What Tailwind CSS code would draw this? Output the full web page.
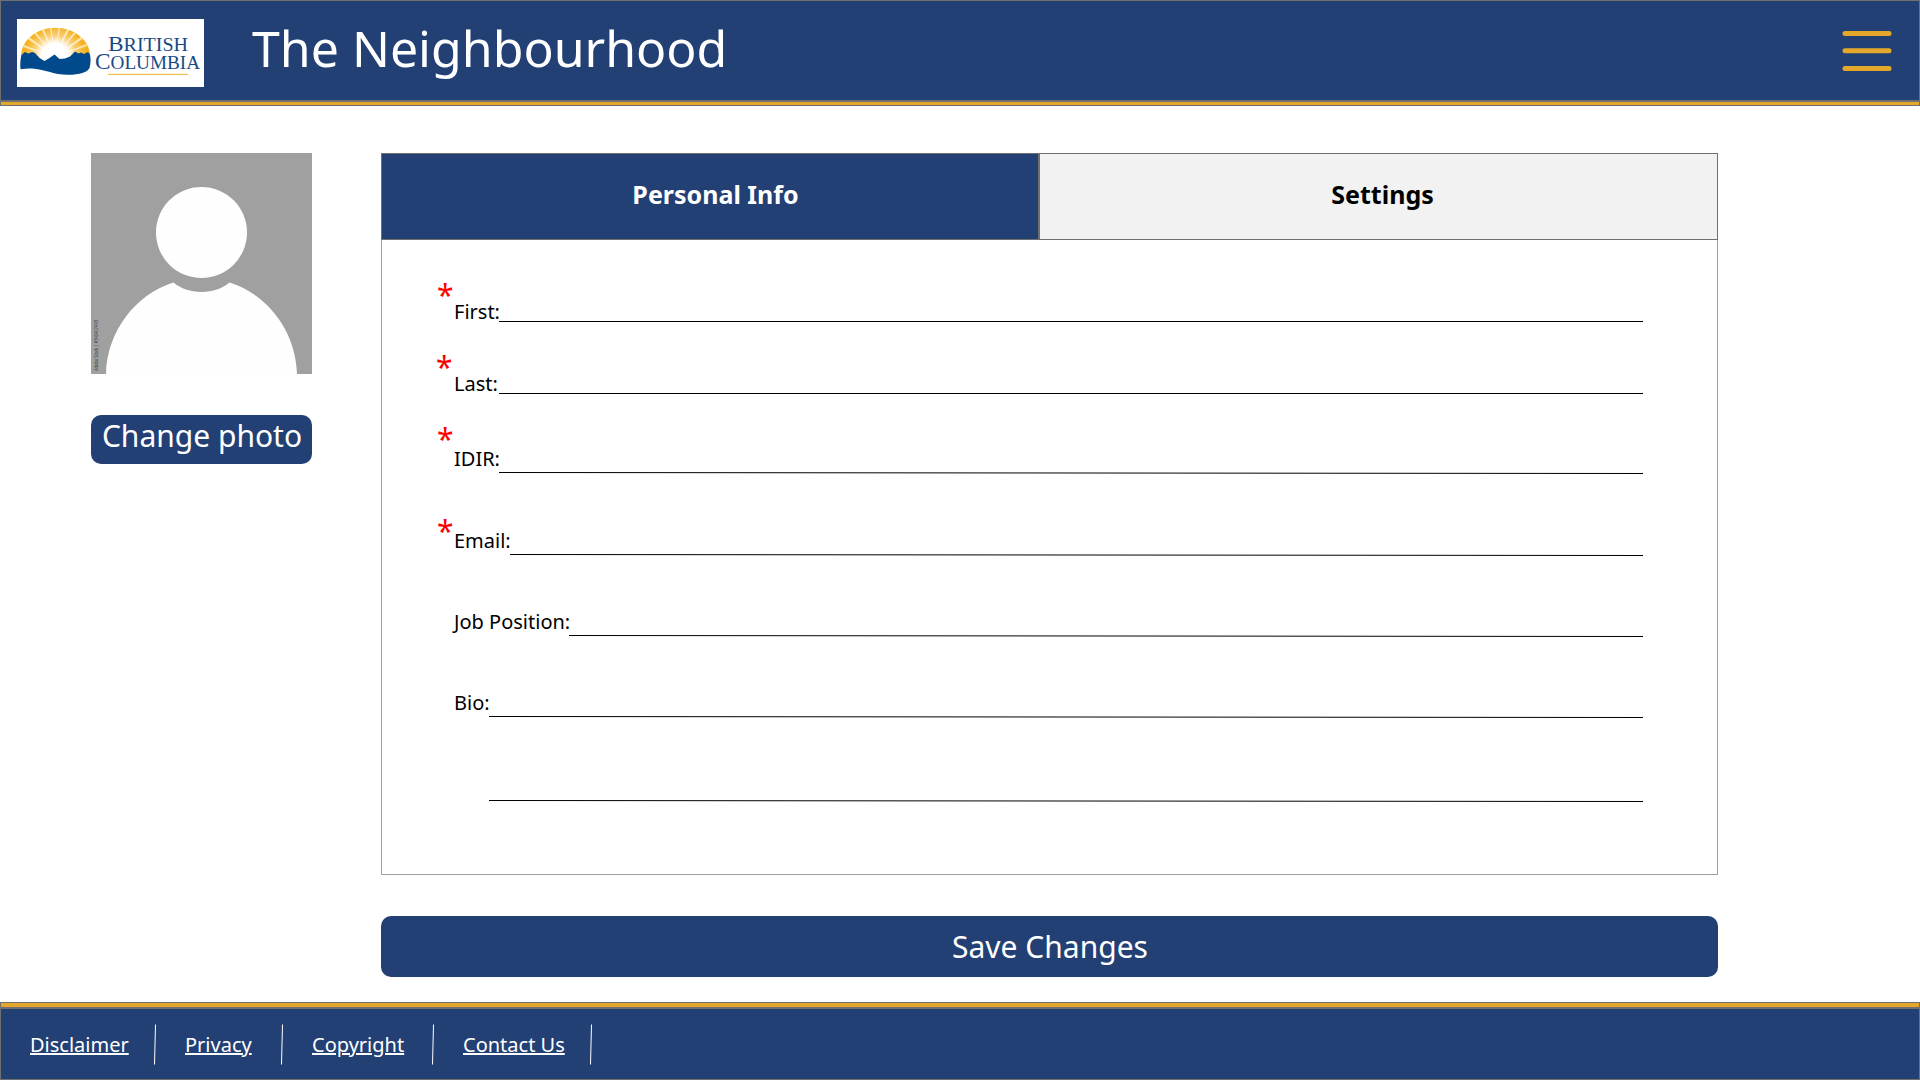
<!DOCTYPE html>
<html lang="en">
<head>
<meta charset="utf-8">
<title>The Neighbourhood</title>
<script src="https://cdn.jsdelivr.net/npm/@tailwindcss/browser@4"></script>
</head>
<body class="flex h-[1080px] w-[1920px] flex-col overflow-hidden bg-white font-['Noto_Sans',sans-serif] text-black">
  <header class="shrink-0">
    <div class="flex h-[101px] items-start border border-[#707070] bg-[#234075] pl-4">
      <svg class="mt-[18px] h-[68px] w-[187px] shrink-0 bg-white" viewBox="17 19 187 68">
        <defs>
          <clipPath id="sun"><path d="M21 56C21 40 37 27.700 55.500 27.700S90 40 90 56V62H21Z"/></clipPath>
          <radialGradient id="glow" gradientUnits="userSpaceOnUse" cx="55" cy="57" r="34">
            <stop offset=".4" stop-color="#fff"/><stop offset=".65" stop-color="#fff" stop-opacity=".35"/><stop offset=".9" stop-color="#fff" stop-opacity="0"/>
          </radialGradient>
        </defs>
        <g clip-path="url(#sun)">
          <path fill="#f7b223" d="M17 19h76v50H17z"/>
          <path fill="#fde6a4" d="M55 57 23 47l1-2zM55 57 26 38l2-2zM55 57 33 32l2-1zM55 57 41 28l2-1zM55 57 50 28h1.500zM55 57 58.500 28H60zM55 57 67 29l2 1zM55 57 75 31l2 1zM55 57 82 36l2 2zM55 57 86 44l1 2z"/>
          <circle cx="55" cy="57" r="34" fill="url(#glow)"/>
        </g>
        <path fill="#00498c" d="M21.500 55 25 52l3.500 1.500L32 52l3 1 4.500 5 5 3 5-3 5-3.500 5 4.500 5.500-.5 5-2L75 51.500l3.500 2 2.500-1 3 1.500 4-2 2 2.500c.8 4 .8 9-.5 13.500-2 4.500-10 6.700-21 6.800C54 75 44 69 32 68.500c-5 0-9 .5-11.500.8-.4-5-.2-10 1-14.300Z"/>
        <g fill="#164a84" font-family="'Liberation Serif',serif">
          <text x="108" y="51.200" font-size="21" textLength="80" lengthAdjust="spacingAndGlyphs">B<tspan font-size="18">RITISH</tspan></text>
          <text x="95" y="69.200" font-size="22.500" textLength="105" lengthAdjust="spacingAndGlyphs">C<tspan font-size="18.500">OLUMBIA</tspan></text>
        </g>
        <path fill="#f3c34f" d="M108 73.800h80v1.300h-80z"/>
      </svg>
      <h1 class="ml-[48px] mt-[13px] text-[50px] leading-[68px] text-white">The Neighbourhood</h1>
      <svg class="ml-auto mr-[27px] mt-[30px] h-10 w-[50px]" viewBox="0 0 50 40" fill="#e3a82b">
        <rect x=".5" width="49" height="5" rx="2.500"/><rect x=".5" y="17.300" width="49" height="5" rx="2.500"/><rect x=".5" y="35" width="49" height="5" rx="2.500"/>
      </svg>
    </div>
    <div class="h-[5px] border border-[#707070] bg-[#e3a82b]"></div>
  </header>

  <main class="flex grow items-start pl-[91px] pt-[47px]">
    <aside class="flex w-[221px] shrink-0 flex-col gap-[41px]">
      <svg class="size-[221px]" viewBox="0 0 221 221">
        <path fill="#a0a0a0" d="M0 0h221v221H0z"/>
        <circle cx="110.500" cy="79.500" r="45.500" fill="#fefefe"/>
        <path fill="#fefefe" d="M15 221C16 178 45 141 82.500 129.500 90 135.500 99 139 110.500 139S131 135.500 138.500 129.500C176 141 205 178 206 221Z"/>
        <text transform="translate(7 218) rotate(-90)" font-size="4.800" fill="#3c3c3c" textLength="51" lengthAdjust="spacingAndGlyphs">Adobe Stock | #340407493</text>
      </svg>
      <button class="flex h-[49px] items-start justify-center rounded-[10px] bg-[#234075] text-[30px] leading-[42px] text-white"><span class="ml-px">Change photo</span></button>
    </aside>

    <section class="ml-[69px] flex w-[1337px] flex-col">
      <div class="flex h-[87px] text-[25px] font-bold">
        <div class="flex w-[658px] justify-center border border-[#707070] bg-[#234075] pl-[11px] pt-[23px] leading-[34px] text-white">Personal Info</div>
        <div class="flex grow justify-center border border-[#707070] bg-[#f2f2f2] pl-[8px] pt-[23px] leading-[34px]">Settings</div>
      </div>
      <form class="flex h-[635px] flex-col border border-t-0 border-[#9f9f9f] pl-[56px] pr-[74px] pt-[58px] text-[20px] leading-7">
        <div class="mb-[42px] flex h-[30px] items-start">
          <span class="-ml-px mr-px -mt-[23px] w-4 text-[30px] leading-10 text-[#ff0000]">*</span><label class="w-[45px]">First:</label>
          <svg class="mt-[21px] h-2 grow" viewBox="0 0 1144 8" preserveAspectRatio="none"><path d="M0 2.500H1144" stroke="#000"/></svg>
        </div>
        <div class="mb-[45px] flex h-[30px] items-start">
          <span class="-ml-0.5 mr-0.5 -mt-[23px] w-4 text-[30px] leading-10 text-[#ff0000]">*</span><label class="w-[45px]">Last:</label>
          <svg class="mt-[21px] h-2 grow" viewBox="0 0 1144 8" preserveAspectRatio="none"><path d="M0 2.500H1144" stroke="#000"/></svg>
        </div>
        <div class="mb-[52px] flex h-[30px] items-start">
          <span class="-ml-px mr-px -mt-[26px] w-4 text-[30px] leading-10 text-[#ff0000]">*</span><label class="w-[45px]">IDIR:</label>
          <svg class="mt-[21px] h-2 grow" viewBox="0 0 1144 8" preserveAspectRatio="none"><path d="M0 6.500 1144 7.500" stroke="#000"/></svg>
        </div>
        <div class="mb-[51px] flex h-[30px] items-start">
          <span class="-ml-px mr-px -mt-[16px] w-4 text-[30px] leading-10 text-[#ff0000]">*</span><label class="w-[56px]">Email:</label>
          <svg class="mt-[21px] h-2 grow" viewBox="0 0 1133 8" preserveAspectRatio="none"><path d="M0 6.500 1133 7.500" stroke="#000"/></svg>
        </div>
        <div class="mb-[51px] flex h-[30px] items-start pl-4">
          <label class="w-[115px] whitespace-nowrap">Job Position:</label>
          <svg class="mt-[21px] h-2 grow" viewBox="0 0 1074 8" preserveAspectRatio="none"><path d="M0 6.500 1074 7.500" stroke="#000"/></svg>
        </div>
        <div class="mb-[54px] flex h-[30px] items-start pl-4">
          <label class="w-[35px]">Bio:</label>
          <svg class="mt-[21px] h-2 grow" viewBox="0 0 1154 8" preserveAspectRatio="none"><path d="M0 6.500 1154 7.500" stroke="#000"/></svg>
        </div>
        <div class="flex h-[30px] items-start pl-[51px]">
          <svg class="mt-[21px] h-2 grow" viewBox="0 0 1154 8" preserveAspectRatio="none"><path d="M0 6.500 1154 7.500" stroke="#000"/></svg>
        </div>
      </form>
      <button class="mt-[41px] h-[61px] rounded-[10px] bg-[#234075] pl-px text-[30px] leading-10 text-white">Save Changes</button>
    </section>
  </main>

  <footer class="shrink-0">
    <div class="h-[6px] border border-[#707070] bg-[#e3a82b]"></div>
    <div class="flex h-[72px] items-start border border-[#707070] bg-[#234075] pl-[29px] text-[20px] leading-7 text-white">
      <a class="mt-[22px] w-[123px] underline">Disclaimer</a>
      <svg class="mt-[15px] h-[41px] w-[4px]" viewBox="0 0 4 41"><path d="M2.500 0.500 1.500 40.500" stroke="#fff"/></svg>
      <a class="ml-[28px] mt-[22px] w-[95px] underline">Privacy</a>
      <svg class="mt-[15px] h-[41px] w-[4px]" viewBox="0 0 4 41"><path d="M2.500 0.500 1.500 40.500" stroke="#fff"/></svg>
      <a class="ml-[28px] mt-[22px] w-[119px] underline">Copyright</a>
      <svg class="mt-[15px] h-[41px] w-[4px]" viewBox="0 0 4 41"><path d="M2.500 0.500 1.500 40.500" stroke="#fff"/></svg>
      <a class="ml-[28px] mt-[22px] w-[126px] underline">Contact Us</a>
      <svg class="mt-[15px] h-[41px] w-[4px]" viewBox="0 0 4 41"><path d="M2.500 0.500 1.500 40.500" stroke="#fff"/></svg>
    </div>
  </footer>
</body>
</html>
